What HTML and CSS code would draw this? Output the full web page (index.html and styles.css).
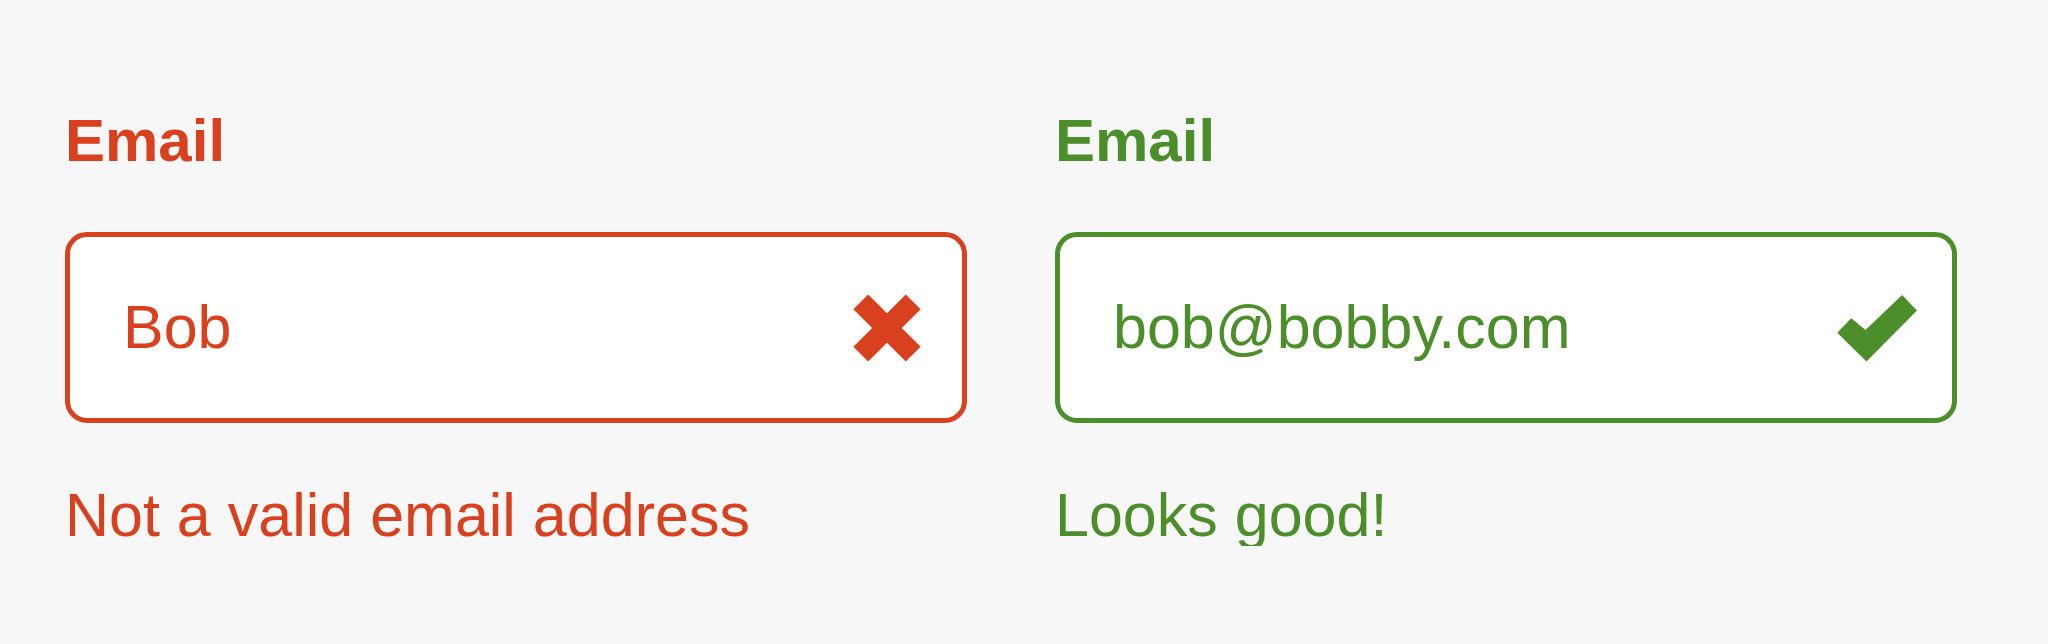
FILE: index.html
```html
<!DOCTYPE html>
<html lang="en">
<head>
  <meta charset="UTF-8">
  <title>Email validation</title>
  <link rel="stylesheet" href="styles.css">
</head>
<body>
  <div class="form">
    <div class="field invalid">
      <label class="label">Email</label>
      <div class="input">
        <span class="value">Bob</span>
        <span class="icon">
          <svg width="68" height="68" viewBox="0 0 68 68">
            <line x1="7.8" y1="7.8" x2="60.2" y2="60.2" stroke="currentColor" stroke-width="21"/>
            <line x1="60.2" y1="7.8" x2="7.8" y2="60.2" stroke="currentColor" stroke-width="21"/>
          </svg>
        </span>
      </div>
      <div class="hint">Not a valid email address</div>
    </div>

    <div class="field valid">
      <label class="label">Email</label>
      <div class="input">
        <span class="value">bob@bobby.com</span>
        <span class="icon">
          <svg width="84" height="70" viewBox="165 212 252 210">
            <polygon points="210,290 170,332 258,418 413,262 370,217 255,327" fill="currentColor" stroke="currentColor" stroke-width="6" stroke-linejoin="miter"/>
          </svg>
        </span>
      </div>
      <div class="hint">Looks good!</div>
    </div>
  </div>
</body>
</html>
```

FILE: styles.css
```css
* {
  box-sizing: border-box;
  margin: 0;
  padding: 0;
}
body {
  background-color: #f7f7f7;
  font-family: 'Liberation Sans', Arial, sans-serif;
}
.form {
  display: flex;
  gap: 88px;
  padding: 111px 91px 0 65px;
}
.field {
  width: 902px;
  display: flex;
  flex-direction: column;
}
.invalid {
  color: #d9411e;
}
.valid {
  color: #4b8e2a;
}
.label {
  display: block;
  font-size: 60px;
  font-weight: bold;
  line-height: 1;
  margin-bottom: 61px;
}
.input {
  height: 191px;
  border: 5.5px solid currentColor;
  border-radius: 22px;
  background: #fff;
  display: flex;
  align-items: center;
  justify-content: space-between;
  padding: 0 35px 0 53px;
}
.value {
  font-size: 61px;
  line-height: 1;
}
.icon {
  width: 80px;
  display: flex;
  justify-content: center;
  align-items: center;
}
.icon svg {
  display: block;
}
.hint {
  margin-top: 62px;
  font-size: 61px;
  line-height: 1;
}
```
